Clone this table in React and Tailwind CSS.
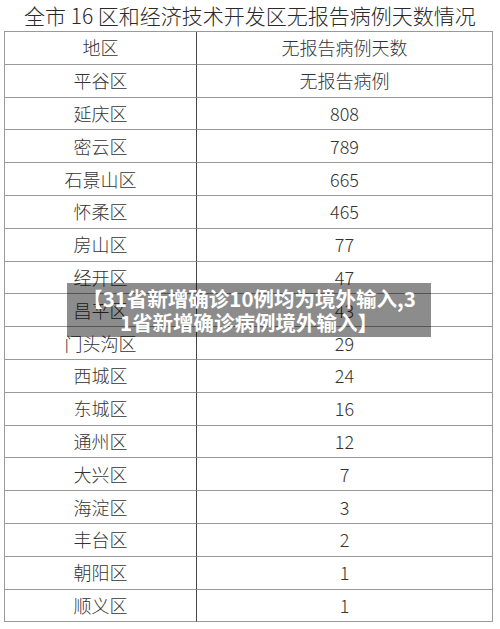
const rows = [
  ["平谷区", "无报告病例"],
  ["延庆区", "808"],
  ["密云区", "789"],
  ["石景山区", "665"],
  ["怀柔区", "465"],
  ["房山区", "77"],
  ["经开区", "47"],
  ["昌平区", "43"],
  ["门头沟区", "29"],
  ["西城区", "24"],
  ["东城区", "16"],
  ["通州区", "12"],
  ["大兴区", "7"],
  ["海淀区", "3"],
  ["丰台区", "2"],
  ["朝阳区", "1"],
  ["顺义区", "1"],
];

const Cell = ({ children, left }) => (
  <div
    className={`h-[32.8px] flex items-center justify-center text-[18px] text-[#333] border-b border-[#9a9a9a] ${
      left ? "border-r border-r-[#444]" : ""
    }`}
  >
    {children}
  </div>
);

const App = () => {
  return (
    <div
      className="relative w-[500px] h-[629px] bg-white overflow-hidden"
      style={{ fontFamily: '"Noto Sans CJK SC", "Noto Sans", sans-serif' }}
    >
      <h1 className="h-[31px] flex items-center justify-center whitespace-nowrap text-[21px] leading-none text-[#2a2a2a] font-light">
        全市 16 区和经济技术开发区无报告病例天数情况
      </h1>

      <div className="ml-[4px] w-[489px] border border-[#9a9a9a] border-b-0 grid grid-cols-[192px_1fr] font-light">
        <Cell left>地区</Cell>
        <Cell>无报告病例天数</Cell>
        {rows.map(([area, days]) => (
          <div key={area} className="contents">
            <Cell left>{area}</Cell>
            <Cell>{days}</Cell>
          </div>
        ))}
      </div>

      <div className="absolute left-[67px] top-[283px] w-[364px] h-[54px] bg-black/45 flex flex-col items-center justify-center">
        <span className="text-white font-bold text-[20.5px] leading-[24px] whitespace-nowrap">
          【31省新增确诊10例均为境外输入,3
        </span>
        <span className="text-white font-bold text-[20.5px] leading-[24px] whitespace-nowrap">
          1省新增确诊病例境外输入】
        </span>
      </div>
    </div>
  );
};

export default App;
